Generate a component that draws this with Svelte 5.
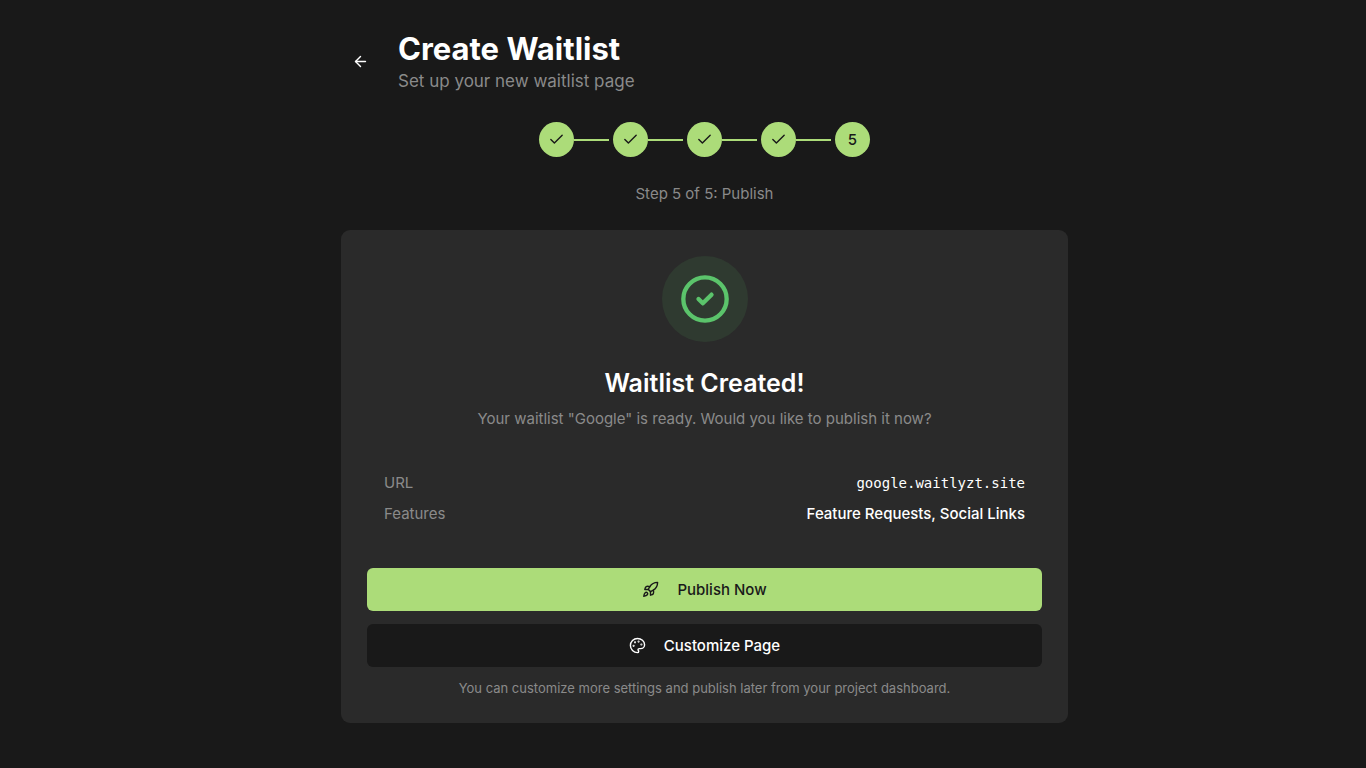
<script>
    let name = "Google";
    let current = 5;
    let steps = [1, 2, 3, 4, 5];
    let rows = [
        { label: "URL", value: "google.waitlyzt.site", mono: true },
        { label: "Features", value: "Feature Requests, Social Links", mono: false }
    ];
</script>

<svelte:head>
    <title>Create Waitlist</title>
</svelte:head>

<main>
    <div class="container">
        <header>
            <button class="back" aria-label="Back">
                <svg class="icon" viewBox="0 0 24 24"><path d="m12 19-7-7 7-7" /><path d="M19 12H5" /></svg>
            </button>
            <div>
                <h1>Create Waitlist</h1>
                <p class="subtitle">Set up your new waitlist page</p>
            </div>
        </header>

        <ol class="steps">
            {#each steps as step}
                <li>
                    <span class="circle">
                        {#if step < current}
                            <svg class="icon" viewBox="0 0 24 24"><path d="M20 6 9 17l-5-5" /></svg>
                        {:else}
                            {step}
                        {/if}
                    </span>
                    {#if step < steps.length}
                        <span class="line"></span>
                    {/if}
                </li>
            {/each}
        </ol>
        <p class="step-text">Step {current} of {steps.length}: Publish</p>

        <section class="card">
            <div class="badge">
                <svg viewBox="0 0 24 24"><circle cx="12" cy="12" r="10" /><path d="m9 12 2 2 4-4" /></svg>
            </div>
            <h2>Waitlist Created!</h2>
            <p class="ready">Your waitlist "{name}" is ready. Would you like to publish it now?</p>

            <dl>
                {#each rows as row}
                    <div class="row">
                        <dt>{row.label}</dt>
                        <dd class:mono={row.mono}>{row.value}</dd>
                    </div>
                {/each}
            </dl>

            <div class="actions">
                <button class="action publish">
                    <svg class="icon" viewBox="0 0 24 24">
                        <path d="M4.5 16.5c-1.5 1.26-2 5-2 5s3.74-.5 5-2c.71-.84.7-2.13-.09-2.91a2.18 2.18 0 0 0-2.91-.09z" />
                        <path d="m12 15-3-3a22 22 0 0 1 2-3.95A12.88 12.88 0 0 1 22 2c0 2.72-.78 7.5-6 11a22.35 22.35 0 0 1-4 2z" />
                        <path d="M9 12H4s.55-3.03 2-4c1.62-1.08 5 0 5 0" />
                        <path d="M12 15v5s3.03-.55 4-2c1.08-1.62 0-5 0-5" />
                    </svg>
                    Publish Now
                </button>
                <button class="action customize">
                    <svg class="icon" viewBox="0 0 24 24">
                        <circle class="dot" cx="13.5" cy="6.5" r=".5" />
                        <circle class="dot" cx="17.5" cy="10.5" r=".5" />
                        <circle class="dot" cx="8.5" cy="7.5" r=".5" />
                        <circle class="dot" cx="6.5" cy="12.5" r=".5" />
                        <path d="M12 2C6.5 2 2 6.5 2 12s4.5 10 10 10c.926 0 1.648-.746 1.648-1.688 0-.437-.18-.835-.437-1.125-.29-.289-.438-.652-.438-1.125a1.64 1.64 0 0 1 1.668-1.668h1.996c3.051 0 5.555-2.503 5.555-5.554C21.965 6.012 17.461 2 12 2z" />
                    </svg>
                    Customize Page
                </button>
            </div>
            <p class="note">You can customize more settings and publish later from your project dashboard.</p>
        </section>
    </div>
</main>

<style>
    :global(body){
        background-color: #191919;
    }
    main{
        padding: 29px 0 44px 43px;
        color: white;
        font-family: Inter, sans-serif;
        font-size: 15px;
        line-height: 22px;
    }
    .container{
        max-width: 727px;
        margin: 0 auto;
    }
    h1, h2, p, ol, dl, dd{
        margin: 0;
        padding: 0;
    }
    button{
        border: none;
        font-family: inherit;
        cursor: pointer;
    }
    svg{
        fill: none;
        stroke: currentColor;
        stroke-width: 2;
        stroke-linecap: round;
        stroke-linejoin: round;
    }
    .icon{
        width: 17px;
        height: 17px;
        flex-shrink: 0;
    }
    header{
        display: flex;
        align-items: center;
        gap: 18px;
    }
    .back{
        display: flex;
        align-items: center;
        justify-content: center;
        width: 39px;
        height: 39px;
        padding: 0;
        background: none;
        color: white;
    }
    h1{
        font-size: 31px;
        line-height: 39px;
        font-weight: 700;
    }
    .subtitle{
        font-size: 17px;
        line-height: 26px;
        color: #8a8a8a;
    }
    .steps{
        display: flex;
        justify-content: center;
        gap: 4px;
        margin-top: 28px;
        list-style: none;
    }
    .steps li{
        display: flex;
        align-items: center;
    }
    .circle{
        display: flex;
        align-items: center;
        justify-content: center;
        width: 35px;
        height: 35px;
        border-radius: 50%;
        background-color: #acdc79;
        color: #191919;
        font-weight: 500;
    }
    .line{
        width: 35px;
        height: 2px;
        background-color: #acdc79;
    }
    .step-text{
        margin-top: 26px;
        text-align: center;
        color: #8a8a8a;
    }
    .card{
        margin-top: 25px;
        padding: 26px;
        border-radius: 9px;
        background-color: #2a2a2a;
        text-align: center;
    }
    .badge{
        display: flex;
        align-items: center;
        justify-content: center;
        width: 86px;
        height: 86px;
        margin: 0 auto;
        border-radius: 50%;
        background-color: #2f3a30;
        color: #5bc46b;
    }
    .badge svg{
        width: 52px;
        height: 52px;
    }
    h2{
        margin-top: 24px;
        font-size: 25px;
        line-height: 35px;
        font-weight: 600;
    }
    .ready{
        margin-top: 7px;
        color: #8a8a8a;
    }
    dl{
        display: flex;
        flex-direction: column;
        gap: 9px;
        margin-top: 25px;
        padding: 17px;
    }
    .row{
        display: flex;
        justify-content: space-between;
    }
    dt{
        color: #8a8a8a;
    }
    dd{
        font-weight: 500;
    }
    .mono{
        font-family: "DejaVu Sans Mono", monospace;
        font-size: 14px;
        font-weight: 400;
    }
    .actions{
        display: flex;
        flex-direction: column;
        gap: 13px;
        margin-top: 26px;
    }
    .action{
        display: flex;
        align-items: center;
        justify-content: center;
        gap: 18px;
        height: 43px;
        border-radius: 6px;
        font-size: 15px;
        font-weight: 500;
    }
    .publish{
        background-color: #acdc79;
        color: #191919;
    }
    .customize{
        background-color: #191919;
        color: white;
    }
    .dot{
        fill: currentColor;
    }
    .note{
        margin-top: 13px;
        font-size: 13px;
        line-height: 17px;
        color: #8a8a8a;
    }
</style>
